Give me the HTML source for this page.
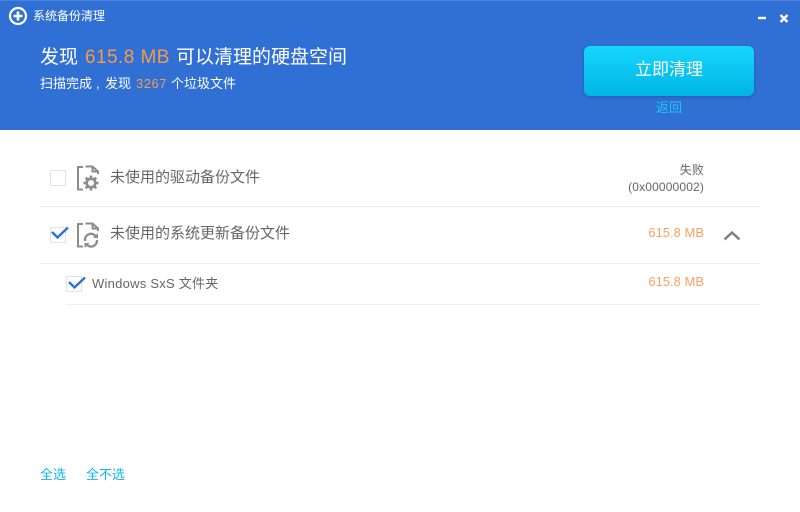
<!DOCTYPE html>
<html lang="zh-CN">
<head>
<meta charset="utf-8">
<title>系统备份清理</title>
<style>
html,body{margin:0;padding:0;background:#fff}
body{width:800px;height:512px;position:relative;overflow:hidden;font-family:"Liberation Sans","Noto Sans CJK SC",sans-serif}
.t{position:absolute;white-space:nowrap;line-height:20px}
.hd{position:absolute;left:0;top:0;width:800px;height:130px;background:#3070d4;border-top:1px solid #4a82dc;box-sizing:border-box}
.o{color:#f59a4a}
.btn{position:absolute;left:584px;top:46px;width:170px;height:50px;border-radius:6px;background:linear-gradient(#17d6fd,#00b5e6);box-shadow:0 1px 3px rgba(20,60,130,.45);color:#fff;font-size:17px;line-height:48px;text-align:center}
.line{position:absolute;height:1px;background:#eeeeee}
.cb{position:absolute;box-sizing:border-box;width:16px;height:16px;border:1px solid #e2e2e2;background:#fff}
.gr{color:#666}
.pk{color:#fba15f;font-size:13px;text-align:right}
svg{position:absolute;overflow:visible}
</style>
</head>
<body>
<div class="hd"></div>

<svg style="left:8px;top:6px" width="20" height="20" viewBox="0 0 20 20">
  <circle cx="10" cy="10" r="8" fill="none" stroke="#fff" stroke-width="2.200"/>
  <path d="M5.500 10H14.500M10 5.500V14.500" stroke="#fff" stroke-width="2.600" fill="none"/>
</svg>
<div class="t" style="left:33px;top:6px;font-size:12px;color:#fff">系统备份清理</div>

<svg style="left:758px;top:14px" width="36" height="12" viewBox="0 0 36 12">
  <path d="M0 4H8" stroke="#fff" stroke-width="2.400"/>
  <path d="M22.500 1L29.500 8M29.500 1L22.500 8" stroke="#fff" stroke-width="2.400"/>
</svg>

<div class="t" style="left:40px;top:48px;font-size:19px;color:#fff">发现</div>
<div class="t o" style="left:85px;top:48px;font-size:19px;letter-spacing:.45px">615.8 MB</div>
<div class="t" style="left:176px;top:48px;font-size:19px;color:#fff">可以清理的硬盘空间</div>

<div class="t" style="left:40px;top:74px;font-size:13px;color:#fff">扫描完成</div>
<div class="t" style="left:96px;top:74px;font-size:13px;color:#fff">,</div>
<div class="t" style="left:105px;top:74px;font-size:13px;color:#fff">发现</div>
<div class="t o" style="left:136px;top:74px;font-size:13px;letter-spacing:.5px">3267</div>
<div class="t" style="left:171px;top:74px;font-size:13px;color:#fff">个垃圾文件</div>

<div class="btn">立即清理</div>
<div class="t" style="left:656px;top:98px;font-size:13px;color:#1ec6f2">返回</div>

<!-- row 1 -->
<div class="cb" style="left:50px;top:170px"></div>
<svg style="left:77px;top:165px" width="24" height="26" viewBox="0 0 24 26" fill="none">
  <path d="M6 2H1V24.500H6M8.500 1.500H15.500L21 6.500V9M15.500 1.500V6.500H21" stroke="#8c8c8c" stroke-width="2"/>
  <circle cx="14" cy="18" r="4.300" stroke="#8c8c8c" stroke-width="2.600"/>
  <path d="M14 10.500V13M14 23V25.500M6.500 18H9M19 18H21.500M8.700 12.700L10.500 14.500M17.500 21.500L19.300 23.300M19.300 12.700L17.500 14.500M10.500 21.500L8.700 23.300" stroke="#8c8c8c" stroke-width="2.600"/>
</svg>
<div class="t gr" style="left:110px;top:168px;font-size:15px">未使用的驱动备份文件</div>
<div class="t gr" style="right:96px;top:162px;font-size:12px;line-height:17px;text-align:right;letter-spacing:.15px">失败<br>(0x00000002)</div>
<div class="line" style="left:40px;top:206px;width:720px"></div>

<!-- row 2 -->
<div class="cb" style="left:50px;top:227px"></div>
<svg style="left:51px;top:226px" width="18" height="14" viewBox="0 0 18 14" fill="none">
  <path d="M1 6L6.500 11.500L17 1.500" stroke="#2c72d6" stroke-width="2.400"/>
</svg>
<svg style="left:77px;top:222px" width="24" height="26" viewBox="0 0 24 26" fill="none">
  <path d="M6 2H1V24.500H6M8.500 1.500H15.500L21 6.500V9M15.500 1.500V6.500H21" stroke="#8c8c8c" stroke-width="2"/>
  <path d="M8 19A6 6 0 0 1 18.500 14" stroke="#8c8c8c" stroke-width="2.400"/>
  <path d="M20 18A6 6 0 0 1 10 23" stroke="#8c8c8c" stroke-width="2.400"/>
  <path d="M16 16H21V11ZM12.500 21H7.500V26Z" fill="#8c8c8c"/>
</svg>
<div class="t gr" style="left:110px;top:224px;font-size:15px">未使用的系统更新备份文件</div>
<div class="t pk" style="right:96px;top:223px">615.8 MB</div>
<svg style="left:723px;top:230px" width="18" height="11" viewBox="0 0 18 11" fill="none">
  <path d="M1.500 9.500L9 2.500L16.500 9.500" stroke="#7d7d7d" stroke-width="2.400"/>
</svg>
<div class="line" style="left:40px;top:263px;width:720px"></div>

<!-- row 3 -->
<div class="cb" style="left:66px;top:276px"></div>
<svg style="left:68px;top:276px" width="18" height="14" viewBox="0 0 18 14" fill="none">
  <path d="M1 6L6.500 11.500L17 1.500" stroke="#2c72d6" stroke-width="2.400"/>
</svg>
<div class="t gr" style="left:92px;top:274px;font-size:13px;letter-spacing:.25px">Windows SxS 文件夹</div>
<div class="t pk" style="right:96px;top:272px">615.8 MB</div>
<div class="line" style="left:66px;top:304px;width:694px"></div>

<!-- footer -->
<div class="t" style="left:40px;top:465px;font-size:13px;color:#10b4f5">全选</div>
<div class="t" style="left:86px;top:465px;font-size:13px;color:#10b4f5">全不选</div>
</body>
</html>
